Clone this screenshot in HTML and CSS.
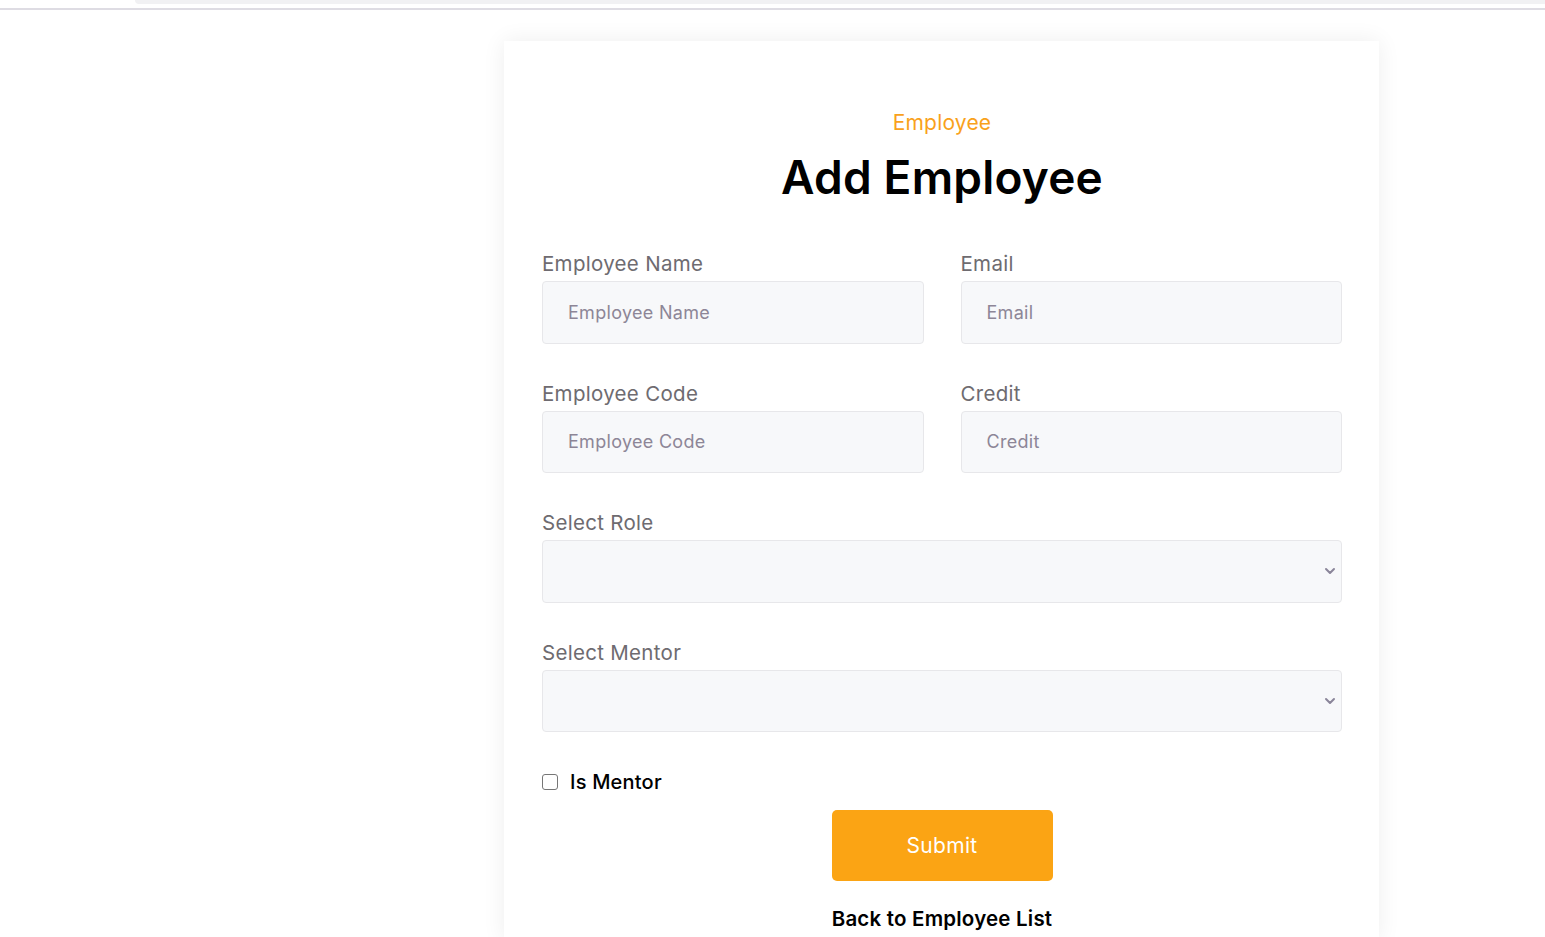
FILE: index.html
```html
<!DOCTYPE html>
<html lang="en">
<head>
<meta charset="utf-8">
<title>Add Employee</title>
<link rel="stylesheet" href="styles.css">
</head>
<body>
<div class="topstrip"><div class="topbar"></div></div>
<main class="page">
  <section class="card">
    <p class="eyebrow">Employee</p>
    <h1 class="title">Add Employee</h1>
    <form class="form">
      <div class="row two">
        <div class="field">
          <label class="label" for="ename">Employee Name</label>
          <input class="input" id="ename" type="text" placeholder="Employee Name">
        </div>
        <div class="field">
          <label class="label" for="email">Email</label>
          <input class="input" id="email" type="text" placeholder="Email">
        </div>
      </div>
      <div class="row two">
        <div class="field">
          <label class="label" for="ecode">Employee Code</label>
          <input class="input" id="ecode" type="text" placeholder="Employee Code">
        </div>
        <div class="field">
          <label class="label" for="credit">Credit</label>
          <input class="input" id="credit" type="text" placeholder="Credit">
        </div>
      </div>
      <div class="row">
        <div class="field">
          <label class="label" for="role">Select Role</label>
          <div class="select" id="role">
            <svg class="chev" width="12" height="8" viewBox="0 0 12 8"><path d="M2 2l4 4 4-4" fill="none" stroke="#8a8599" stroke-width="2" stroke-linecap="round" stroke-linejoin="round"/></svg>
          </div>
        </div>
      </div>
      <div class="row">
        <div class="field">
          <label class="label" for="mentor">Select Mentor</label>
          <div class="select" id="mentor">
            <svg class="chev" width="12" height="8" viewBox="0 0 12 8"><path d="M2 2l4 4 4-4" fill="none" stroke="#8a8599" stroke-width="2" stroke-linecap="round" stroke-linejoin="round"/></svg>
          </div>
        </div>
      </div>
      <div class="check">
        <span class="box"></span>
        <span class="check-label">Is Mentor</span>
      </div>
      <div class="actions">
        <button class="submit" type="button">Submit</button>
        <a class="back" href="#">Back to Employee List</a>
      </div>
    </form>
  </section>
</main>
</body>
</html>
```
FILE: styles.css
```css
* { box-sizing: border-box; }
html, body { margin: 0; padding: 0; background: #ffffff; }
body {
  font-family: Inter, "Open Sans", "Liberation Sans", sans-serif;
  height: 937px;
  overflow: hidden;
}
.topstrip {
  height: 10px;
  border-bottom: 2px solid #dedce3;
}
.topbar {
  margin-left: 135px;
  height: 4px;
  background: #f1f1f3;
  border-bottom-left-radius: 6px;
}
.page {
  padding-top: 31px;
  padding-left: 504px;
}
.card {
  width: 875px;
  min-height: 900px;
  background: #fff;
  box-shadow: 0 0 22px rgba(0, 0, 0, 0.07);
  padding: 69px 37px 0 38px;
}
.eyebrow {
  margin: 0;
  text-align: center;
  color: #f9a11b;
  font-size: 21px;
  line-height: 26px;
  letter-spacing: 0.2px;
}
.title {
  margin: 15px 0 0;
  text-align: center;
  font-size: 46px;
  line-height: 52px;
  font-weight: 600;
  color: #000;
  letter-spacing: 0.2px;
}
.form {
  margin-top: 49px;
}
.row { margin-bottom: 38px; }
.row.two {
  display: grid;
  grid-template-columns: 1fr 1fr;
  column-gap: 37px;
}
.field { display: flex; flex-direction: column; }
.label {
  font-size: 20.5px;
  line-height: 24px;
  color: #6e6b70;
  margin-bottom: 5px;
  letter-spacing: 0.3px;
}
.input, .select {
  height: 62.5px;
  background: #f7f8fa;
  border: 1px solid #e7e7ea;
  border-radius: 4px;
  font-family: inherit;
  font-size: 18px;
  letter-spacing: 0.3px;
  padding: 0 25px;
  color: #333;
  outline: none;
  width: 100%;
}
.input::placeholder { color: #8d8697; }
.select {
  display: flex;
  align-items: center;
  justify-content: flex-end;
  padding: 0 5px 0 25px;
}
.chev { display: block; }
.check {
  display: flex;
  align-items: center;
  height: 24px;
  margin-top: 3px;
}
.box {
  width: 16px;
  height: 16px;
  border: 1px solid #767676;
  border-radius: 3px;
  background: #fff;
  margin-right: 12px;
}
.check-label {
  font-size: 20px;
  color: #000;
  font-weight: 500;
  letter-spacing: 0.2px;
}
.actions {
  display: flex;
  flex-direction: column;
  align-items: center;
  margin-top: 16px;
}
.submit {
  width: 221px;
  height: 71px;
  border: 0;
  border-radius: 5px;
  background: #fba414;
  color: #fff;
  font-family: inherit;
  font-size: 21px;
  letter-spacing: 0.3px;
  cursor: pointer;
}
.back {
  margin-top: 25px;
  font-size: 20.5px;
  font-weight: 600;
  color: #000;
  text-decoration: none;
  letter-spacing: 0.2px;
}
```
